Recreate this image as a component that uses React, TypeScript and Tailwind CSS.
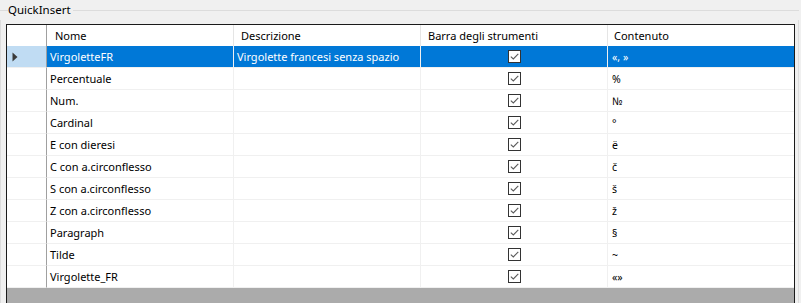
import React from "react";

type Row = { nome: string; desc: string; content: string };

const rows: Row[] = [
  { nome: "VirgoletteFR", desc: "Virgolette francesi senza spazio", content: "«, »" },
  { nome: "Percentuale", desc: "", content: "%" },
  { nome: "Num.", desc: "", content: "№" },
  { nome: "Cardinal", desc: "", content: "°" },
  { nome: "E con dieresi", desc: "", content: "ë" },
  { nome: "C con a.circonflesso", desc: "", content: "č" },
  { nome: "S con a.circonflesso", desc: "", content: "š" },
  { nome: "Z con a.circonflesso", desc: "", content: "ž" },
  { nome: "Paragraph", desc: "", content: "§" },
  { nome: "Tilde", desc: "", content: "~" },
  { nome: "Virgolette_FR", desc: "", content: "«»" },
];

function CheckBox() {
  return (
    <div className="w-[13px] h-[13px] bg-white border border-[#333333] flex items-center justify-center">
      <svg width="11" height="11" viewBox="0 0 11 11">
        <path d="M1.8 5.6 L4.3 7.9 L9.3 2.8" fill="none" stroke="#5a5a5a" strokeWidth="1.1" />
      </svg>
    </div>
  );
}

export default function App() {
  return (
    <div
      className="w-[801px] h-[303px] bg-[#f0f0f0] overflow-hidden text-[11px] text-black"
      style={{ fontFamily: '"Noto Sans", "Open Sans", sans-serif' }}
    >
      <div className="flex items-center h-[20px] pr-[2px]">
        <div className="w-[8px] h-px bg-[#dcdcdc]" />
        <span className="leading-[14px] text-[11.5px]">QuickInsert</span>
        <div className="flex-1 h-px bg-[#dcdcdc] ml-[2px]" />
      </div>
      <div className="mr-[2px] border-l border-r border-[#dcdcdc] h-[283px] pt-[4px] pl-[5px]">
        <div className="w-[789px] h-[300px] border border-[#1a1a1a] bg-[#ababab] flex flex-col">
          {/* header */}
          <div className="flex h-[21px] bg-white shrink-0 pt-[2px]">
            <div className="w-[40px] border-r border-[#a0a0a0] -mt-[2px]" />
            <div className="w-[187px] border-r border-[#e5e5e5] pl-[8px] flex items-center -mt-[2px] pt-[2px]">Nome</div>
            <div className="w-[187px] border-r border-[#e5e5e5] pl-[7px] flex items-center -mt-[2px] pt-[2px]">Descrizione</div>
            <div className="w-[187px] border-r border-[#e5e5e5] pl-[7px] flex items-center -mt-[2px] pt-[2px]">Barra degli strumenti</div>
            <div className="w-[186px] pl-[6px] flex items-center -mt-[2px] pt-[2px]">Contenuto</div>
          </div>
          {rows.map((r, i) => {
            const sel = i === 0;
            return (
              <div key={i} className="flex h-[22px] shrink-0 bg-white">
                <div
                  className={
                    "w-[40px] border-r border-b border-r-[#a0a0a0] border-b-[#f0f0f0] flex items-center pl-[5px] " +
                    (sel ? "bg-[#c0dcf3]" : "bg-white")
                  }
                >
                  {sel && (
                    <svg width="6" height="10" viewBox="0 0 6 10">
                      <path d="M0.5 0.5 L5.5 5 L0.5 9.5 Z" fill="#3a3a3a" />
                    </svg>
                  )}
                </div>
                <div
                  className={
                    "w-[187px] border-r border-b border-[#f0f0f0] pl-[3px] pt-[2px] flex items-center whitespace-nowrap overflow-hidden " +
                    (sel ? "bg-[#0078d7] text-white" : "")
                  }
                >
                  {r.nome}
                </div>
                <div
                  className={
                    "w-[187px] border-r border-b border-[#f0f0f0] pl-[3px] pt-[2px] flex items-center whitespace-nowrap overflow-hidden " +
                    (sel ? "bg-[#0078d7] text-white" : "")
                  }
                >
                  {r.desc}
                </div>
                <div
                  className={
                    "w-[187px] border-r border-b border-[#f0f0f0] flex items-center justify-center " +
                    (sel ? "bg-[#0078d7]" : "")
                  }
                >
                  <CheckBox />
                </div>
                <div
                  className={
                    "w-[186px] border-b border-[#f0f0f0] pl-[4px] pt-[2px] flex items-center text-[10.5px] " +
                    (sel ? "bg-[#0078d7] text-white" : "")
                  }
                >
                  {r.content}
                </div>
              </div>
            );
          })}
        </div>
      </div>
    </div>
  );
}
